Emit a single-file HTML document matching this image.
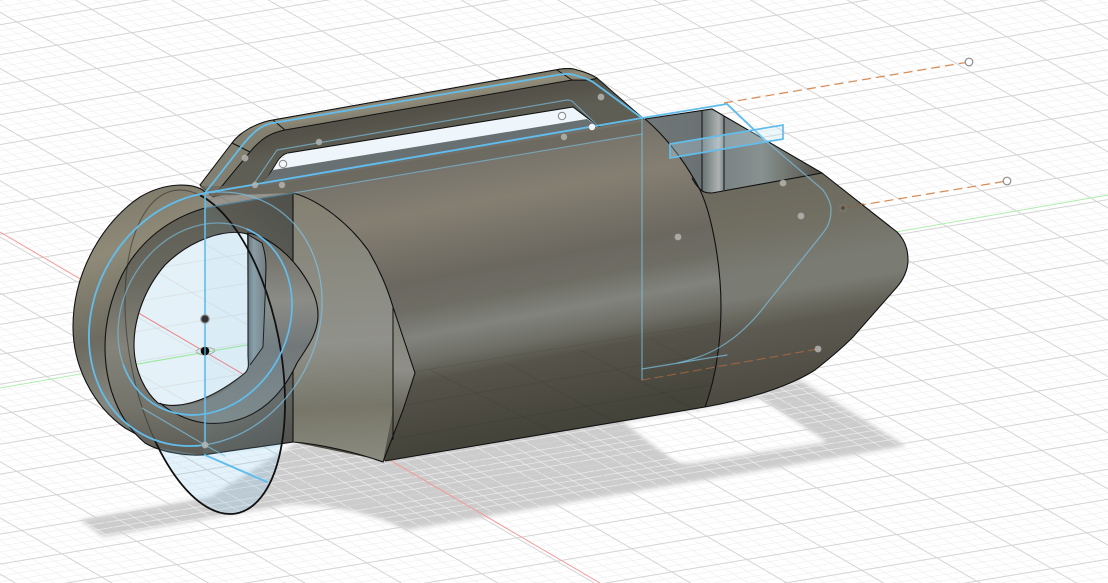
<!DOCTYPE html>
<html><head><meta charset="utf-8"><style>html,body{margin:0;padding:0;background:#fff}svg{display:block}</style></head>
<body>
<svg width="1108" height="583" viewBox="0 0 1108 583" xmlns="http://www.w3.org/2000/svg">
<defs>
<pattern id="grid" patternUnits="userSpaceOnUse" width="100" height="100" patternTransform="matrix(.75 -.125 .4 .233 131.7 32.7)">
<g fill="none">
<path d="M20 0V100M40 0V100M60 0V100M80 0V100" stroke="#efefef" stroke-width="1.3"/>
<path d="M0 20H100M0 40H100M0 60H100M0 80H100" stroke="#efefef" stroke-width="2.1"/>
<path d="M0 0V100M100 0V100" stroke="#cfcfcf" stroke-width="1.8"/>
<path d="M0 0H100M0 100H100" stroke="#d2d2d2" stroke-width="3"/>
</g></pattern>
<filter id="b2" x="-10%" y="-10%" width="120%" height="120%"><feGaussianBlur stdDeviation="2.2"/></filter>
<linearGradient id="body" gradientUnits="userSpaceOnUse" x1="450" y1="130" x2="514" y2="470">
<stop offset="0" stop-color="#686660"/><stop offset=".08" stop-color="#75726a"/><stop offset=".22" stop-color="#857f72"/><stop offset=".41" stop-color="#6b6860"/><stop offset=".49" stop-color="#6e6d64"/><stop offset=".57" stop-color="#81837c"/><stop offset=".64" stop-color="#6f6f67"/><stop offset=".70" stop-color="#56544a"/><stop offset=".89" stop-color="#45443b"/><stop offset="1" stop-color="#424037"/>
</linearGradient>
<linearGradient id="nose" gradientUnits="userSpaceOnUse" x1="770" y1="170" x2="810" y2="400">
<stop offset="0" stop-color="#6b685d"/><stop offset=".22" stop-color="#716e62"/><stop offset=".42" stop-color="#7a7b73"/><stop offset=".52" stop-color="#7a7b73"/><stop offset=".66" stop-color="#5d5b51"/><stop offset="1" stop-color="#4a483e"/>
</linearGradient>
<linearGradient id="fil" gradientUnits="userSpaceOnUse" x1="330" y1="200" x2="345" y2="460">
<stop offset="0" stop-color="#858172"/><stop offset=".3" stop-color="#8b8b82"/><stop offset=".55" stop-color="#90918a"/><stop offset=".8" stop-color="#777669"/><stop offset="1" stop-color="#8a8a7e"/>
</linearGradient>
<linearGradient id="strip" gradientUnits="userSpaceOnUse" x1="400" y1="310" x2="400" y2="460">
<stop offset="0" stop-color="#85857b"/><stop offset=".4" stop-color="#8f8f87"/><stop offset=".65" stop-color="#6a695f"/><stop offset="1" stop-color="#4d4b42"/>
</linearGradient>
<linearGradient id="fl" gradientUnits="userSpaceOnUse" x1="90" y1="190" x2="170" y2="440">
<stop offset="0" stop-color="#7b7768"/><stop offset=".25" stop-color="#8f8a78"/><stop offset=".55" stop-color="#6d6b60"/><stop offset=".8" stop-color="#85867e"/><stop offset="1" stop-color="#66655c"/>
</linearGradient>
<linearGradient id="face" gradientUnits="userSpaceOnUse" x1="190" y1="205" x2="205" y2="455">
<stop offset="0" stop-color="#5d5c52"/><stop offset=".3" stop-color="#6b6a60"/><stop offset=".55" stop-color="#83837a"/><stop offset=".8" stop-color="#74736a"/><stop offset="1" stop-color="#5b5a53"/>
</linearGradient>
<linearGradient id="rt" gradientUnits="userSpaceOnUse" x1="200" y1="0" x2="293" y2="0">
<stop offset="0" stop-color="#33383e" stop-opacity="0"/><stop offset="1" stop-color="#33383e" stop-opacity=".32"/>
</linearGradient>
<linearGradient id="rim" gradientUnits="userSpaceOnUse" x1="250" y1="240" x2="260" y2="420">
<stop offset="0" stop-color="#6d6c64"/><stop offset=".35" stop-color="#8b8c86"/><stop offset=".6" stop-color="#72787a"/><stop offset="1" stop-color="#7d8584"/>
</linearGradient>
<linearGradient id="slot" x1="0" y1="0" x2="1" y2="0">
<stop offset="0" stop-color="#5f6d73"/><stop offset=".35" stop-color="#8b9ca4"/><stop offset="1" stop-color="#737d80"/>
</linearGradient>
<linearGradient id="top" gradientUnits="userSpaceOnUse" x1="400" y1="96" x2="402.2" y2="110">
<stop offset="0" stop-color="#7d7968"/><stop offset=".4" stop-color="#938e7b"/><stop offset="1" stop-color="#827f70"/>
</linearGradient>
<linearGradient id="hface" gradientUnits="userSpaceOnUse" x1="420" y1="95" x2="427" y2="135">
<stop offset="0" stop-color="#4f4d43"/><stop offset=".5" stop-color="#56544a"/><stop offset="1" stop-color="#5f5e55"/>
</linearGradient>
<linearGradient id="pocket" gradientUnits="userSpaceOnUse" x1="650" y1="0" x2="822" y2="0">
<stop offset="0" stop-color="#6f7676"/><stop offset=".3" stop-color="#6b7273"/><stop offset=".33" stop-color="#7b8384"/><stop offset=".4" stop-color="#aeb3b2"/><stop offset=".43" stop-color="#7b8384"/><stop offset=".65" stop-color="#87918f"/><stop offset=".85" stop-color="#6a6c66"/><stop offset="1" stop-color="#4d4b42"/>
</linearGradient>
<clipPath id="holec"><path d="M247 234C225 228 190 240 165 265C145 288 134 318 134 345C134 370 145 392 158 403C175 409 205 405 245 373C250 368 248 363 248 355Z"/></clipPath>
<clipPath id="elFront"><path d="M205 170H340V560H90L153 447Z"/></clipPath>
<clipPath id="elBelow"><path d="M100 452L153 447 203 455 293 442V560H100Z"/></clipPath>
<clipPath id="elOver"><path d="M205 170H340V442L203 455Z"/></clipPath>
<clipPath id="leftHalf"><path d="M205 100V441L153 500H0V100Z"/></clipPath>
<clipPath id="innerBright"><path d="M205 319L260 200 400 100V500H60V400Z"/></clipPath>
</defs>

<rect width="1108" height="583" fill="#fff"/>
<path fill-rule="evenodd" filter="url(#b2)" fill="#000" fill-opacity=".2" d="M80 520L210 497 300 440 800 380 906 446 407 530C375 515 330 503 287 505L103 537ZM623 422L760 398 827 442 693 463C682 464 675 462 670 458Z"/>
<rect width="1108" height="583" fill="url(#grid)"/>
<path d="M0 232L600 583" stroke="#f29a9a" stroke-width="1" fill="none"/>
<path d="M0 388L1108 195" stroke="#aeedae" stroke-width="1" fill="none"/>
<path d="M724 103L969 62" stroke="#d78a52" stroke-width="1.2" stroke-dasharray="9 5" fill="none"/>
<path d="M843 208L1007 181" stroke="#d78a52" stroke-width="1.2" stroke-dasharray="9 5" fill="none"/>
<circle cx="969" cy="62" r="3.8" fill="#fff" stroke="#8d8d8d" stroke-width="1.2"/>
<circle cx="1007" cy="181" r="3.8" fill="#fff" stroke="#8d8d8d" stroke-width="1.2"/>

<!-- handle -->
<path d="M200 185L232 143C238 135 245 131 250 128C258 124 265 121 273 120L555 70C565 68 572 68 577 70C585 72 592 75 597 78L645 120 605 131 573 107 288 153C283 154 280 157 277 162L263 185 213 197Z" fill="url(#hface)" stroke="#111" stroke-width="1"/>
<path d="M200 185L232 143C238 135 245 131 250 128C258 124 265 121 273 120L555 70C565 68 572 68 577 70C585 72 592 75 597 78 590 81 580 80 572 80L285 130C275 132 268 135 262 140C257 144 253 148 250 152L213 197Z" fill="url(#top)" stroke="#111" stroke-width="1"/>
<path d="M232 143L250 152M273 120L285 130M557 70L572 80" stroke="#111" stroke-width="1" fill="none"/>
<path d="M273 170L288 153 573 107 587 119 300 168Z" fill="#eef6fb"/>
<path d="M262 184L273 170 587 119 605 131 642 124 642 128 255 192Z" fill="#687072"/>
<path d="M288 153L573 107 605 131 642 124" stroke="#111" stroke-width="1" fill="none"/>

<!-- main body -->
<path d="M205 196L255 186 645 119C670 140 690 170 700 190C712 215 721 265 721 307C721 345 715 380 705 407L385 461 293 442 293 193Z" fill="url(#body)"/>
<path d="M200 186L262 186 642 122 642 134 293 193 205 208Z" fill="#6a675d" opacity=".7"/>
<!-- reflections -->
<g stroke="#000" stroke-opacity=".07" fill="none" stroke-width="1">
<path d="M412 372L721 322M405 405L721 352M398 438L716 384"/>
<path d="M430 370L500 405 590 450M505 362L620 425M580 350L700 412M650 338L722 378"/>
</g>

<!-- nose -->
<path d="M645 119L712 109 822 173 897 232C905 240 908 250 908 260C908 270 903 280 897 287L853 337C838 352 825 362 815 370C790 386 750 399 705 407C715 380 721 345 721 307C721 265 712 215 700 190C690 170 670 140 645 119Z" fill="url(#nose)"/>
<!-- pocket -->
<path d="M645 119L712 109 822 173 712 193C706 193 702 192 699 188C696 185 694 182 692 178C680 155 665 135 645 119Z" fill="url(#pocket)"/>
<path d="M702 110V191M724 116V190" stroke="#111" stroke-width="1" fill="none"/>
<path d="M645 119L712 109 822 173 712 193C706 193 702 192 699 188C696 185 694 182 692 178" stroke="#111" stroke-width="1.1" fill="none"/>
<path d="M822 173L897 232C905 240 908 250 908 260C908 270 903 280 897 287L853 337C838 352 825 362 815 370C790 386 750 399 705 407L385 461" stroke="#111" stroke-width="1.1" fill="none"/>
<path d="M645 119C670 140 690 170 700 190C712 215 721 265 721 307C721 345 715 380 705 407" stroke="#111" stroke-width="1.1" fill="none"/>
<path d="M843 208L868 203" stroke="#8a5f3d" stroke-width="1" stroke-dasharray="8 5" fill="none"/>

<!-- fillet piece -->
<path d="M293 193C320 200 350 225 368 250C380 270 388 290 393 307L393 410 383 462C355 452 320 444 293 442Z" fill="url(#fil)"/>
<path d="M393 307L415 373 403 410 383 462 393 410Z" fill="url(#strip)"/>
<path d="M293 193C320 200 350 225 368 250C380 270 388 290 393 307L415 373 403 410 383 462C355 452 320 444 293 442" stroke="#111" stroke-width="1.1" fill="none"/>
<path d="M393 307V440" stroke="#111" stroke-width="1" fill="none"/>

<!-- flange -->
<path d="M205 192C195 182 165 182 140 197C105 220 73 270 73 327C73 365 92 405 125 428L165 450 205 300Z" fill="url(#fl)" stroke="#111" stroke-width="1.1"/>
<!-- ring face + block -->
<path d="M205 208C170 218 140 240 122 275C110 300 105 325 105 347C105 385 118 420 145 443C160 452 185 456 203 455L293 442V193Z" fill="url(#face)"/>
<path d="M205 208C170 218 140 240 122 275C110 300 105 325 105 347C105 385 118 420 145 443C160 452 185 456 203 455L293 442V193Z" fill="url(#rt)" stroke="#111" stroke-width="1.1"/>

<!-- rim -->
<path d="M247 233C265 235 285 250 300 270C312 287 318 300 318 315C318 335 305 350 297 363C290 378 280 395 262 408C245 420 225 425 205 423C188 421 172 413 160 403L180 405C205 405 230 390 245 373L248 355Z" fill="url(#rim)"/>
<path d="M247 234L262 243C265 252 266 260 266 267L265 300 263 347 250 365 248 360Z" fill="url(#slot)"/>
<!-- hole -->
<path d="M247 234C225 228 190 240 165 265C145 288 134 318 134 345C134 370 145 392 158 403C175 409 205 405 245 373C250 368 248 363 248 355Z" fill="#e3f1f9"/>
<g clip-path="url(#holec)">
<rect x="120" y="225" width="140" height="190" fill="url(#grid)" opacity=".5"/>
<path d="M0 232L600 583" stroke="#ee8a8a" stroke-width="1" fill="none"/>
<path d="M0 388L1108 195" stroke="#9be89b" stroke-width="1.1" fill="none"/>
</g>
<path d="M247 233C265 235 285 250 300 270C312 287 318 300 318 315C318 335 305 350 297 363C290 378 280 395 262 408C245 420 225 425 205 423C188 421 172 413 160 403" stroke="#111" stroke-width="1.1" fill="none"/>
<path d="M247 234C225 228 190 240 165 265C145 288 134 318 134 345C134 370 145 392 158 403C175 409 205 405 245 373C250 368 248 363 248 355V234Z" stroke="#111" stroke-width="1.1" fill="none"/>
<path d="M247 234L262 243C265 252 266 260 266 267L265 300 263 347 250 365" stroke="#111" stroke-width="1" fill="none"/>

<!-- sketch plane ellipse -->
<g transform="translate(205 352) rotate(78.9)">
<ellipse rx="164.4" ry="74.9" fill="none" stroke="#222" stroke-opacity=".5" stroke-width="1.1"/>
</g>
<g clip-path="url(#elBelow)"><ellipse rx="164.4" ry="74.9" transform="translate(205 352) rotate(78.9)" fill="#86c8ec" fill-opacity=".22"/></g>
<g clip-path="url(#elOver)"><ellipse rx="164.4" ry="74.9" transform="translate(205 352) rotate(78.9)" fill="#86c8ec" fill-opacity=".09"/></g>
<g clip-path="url(#elFront)"><ellipse rx="164.4" ry="74.9" transform="translate(205 352) rotate(78.9)" fill="none" stroke="#111" stroke-width="1.8"/></g>

<!-- sketch lines -->
<g fill="none" stroke-linecap="round">
<ellipse rx="131.4" ry="111.6" transform="translate(205.5 319) rotate(-61)" stroke="#7cc4e8" stroke-opacity=".7" stroke-width="1.3"/>
<g clip-path="url(#leftHalf)"><ellipse rx="131.4" ry="111.6" transform="translate(205.5 319) rotate(-61)" stroke="#62bdec" stroke-width="1.8"/></g>
<ellipse rx="99.3" ry="83.2" transform="translate(205 319) rotate(-62)" stroke="#7cc4e8" stroke-opacity=".6" stroke-width="1.3"/>
<g clip-path="url(#innerBright)"><ellipse rx="99.3" ry="83.2" transform="translate(205 319) rotate(-62)" stroke="#62bdec" stroke-width="1.7"/></g>
<path d="M205 193V447" stroke="#62bdec" stroke-width="1.6"/>
<path d="M205 455L267 482" stroke="#62bdec" stroke-width="2"/>
<path d="M142 408L205 445 225 456" stroke="#7cc4e8" stroke-opacity=".7" stroke-width="1.2"/>
<path d="M205 193L245 142C255 130 265 124 273 123L557 75C567 73 572 74 577 76C585 78 590 80 593 82L642 118" stroke="#62bdec" stroke-width="1.8"/>
<path d="M205 193L253 185 277 150 567 100C571 100 572 101 574 103L597 125" stroke="#7cc4e8" stroke-opacity=".65" stroke-width="1.2"/>
<path d="M205 193L642 118 727 104 767 142" stroke="#62bdec" stroke-width="1.9"/>
<path d="M205 208L642 134" stroke="#7cc4e8" stroke-opacity=".6" stroke-width="1.2"/>
<path d="M642 118V380" stroke="#7cc4e8" stroke-opacity=".7" stroke-width="1.2"/>
<path d="M642 369L727 355" stroke="#7cc4e8" stroke-opacity=".7" stroke-width="1.2"/>
<path d="M642 380L818 349" stroke="#a9693e" stroke-opacity=".8" stroke-width="1.1" stroke-dasharray="8 5"/>
<path d="M767 142L823 190C828 197 831 203 831 210C831 220 828 227 823 233L760 312C745 330 732 340 720 347C705 356 690 360 678 363" stroke="#7cc4e8" stroke-opacity=".65" stroke-width="1.3"/>
<path d="M670 144L783 125V139L670 158Z" stroke="#62bdec" stroke-width="1.7" fill="#bfe4f6" fill-opacity=".3"/>
</g>

<!-- points -->
<g fill="#b4b4b0" fill-opacity=".85">
<circle cx="245" cy="158" r="3.4"/><circle cx="319" cy="142" r="3.2"/><circle cx="282" cy="185" r="3.2"/><circle cx="255" cy="185" r="3.2"/>
<circle cx="564" cy="137" r="3.2"/><circle cx="601" cy="97" r="3.4"/><circle cx="678" cy="237" r="3.4"/><circle cx="783" cy="183" r="3.4"/>
<circle cx="801" cy="216" r="3.4"/><circle cx="818" cy="349" r="3.4"/><circle cx="205" cy="445" r="3.4"/>
</g>
<circle cx="592" cy="127" r="3.2" fill="#f5f5f5"/>
<circle cx="283" cy="164" r="3.7" fill="#f4f8fa" stroke="#8d8d8d" stroke-width="1.1"/>
<circle cx="562" cy="116" r="3.7" fill="#f4f8fa" stroke="#8d8d8d" stroke-width="1.1"/>
<circle cx="843" cy="208" r="3" fill="#5a5247" stroke="#8a8378" stroke-width="1"/>
<circle cx="205" cy="319" r="4.2" fill="#333" stroke="#999" stroke-width="1.2"/>
<path d="M196 351C200 347 210 346 215 350M196 352C200 356 210 356 215 351" stroke="#aaa" stroke-width="1" fill="none"/>
<circle cx="205" cy="351" r="4.3" fill="#0c0c0c"/>
<path d="M205 346V356" stroke="#62bdec" stroke-width="1.2"/>
</svg>
</body></html>
